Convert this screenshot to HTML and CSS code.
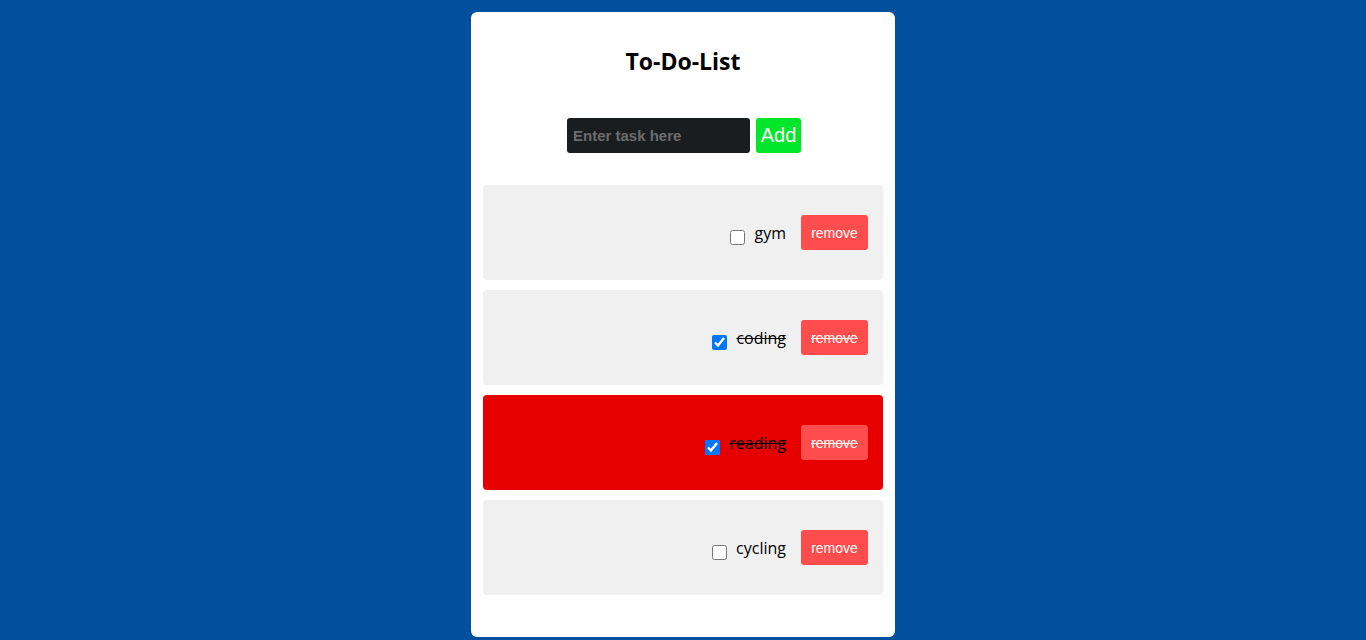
FILE: index.html
```html
<!DOCTYPE html>
<html>
<head>
<meta charset="utf-8">
<link rel="stylesheet" href="styles.css">
</head>
<body>
<div class="card">
  <h1 class="title">To-Do-List</h1>
  <div class="add-row">
    <input class="task-input" type="text" placeholder="Enter task here">
    <button class="add-btn">Add</button>
  </div>
  <ul class="list">
    <li class="item">
      <input type="checkbox" class="check">
      <span class="label">gym</span>
      <button class="remove">remove</button>
    </li>
    <li class="item done">
      <input type="checkbox" class="check" checked>
      <span class="label">coding</span>
      <button class="remove">remove</button>
    </li>
    <li class="item done urgent">
      <input type="checkbox" class="check" checked>
      <span class="label">reading</span>
      <button class="remove">remove</button>
    </li>
    <li class="item">
      <input type="checkbox" class="check">
      <span class="label">cycling</span>
      <button class="remove">remove</button>
    </li>
  </ul>
</div>
</body>
</html>
```

FILE: styles.css
```css
html, body {
  margin: 0;
  padding: 0;
}
body {
  background: #00509d;
  height: 640px;
  overflow: hidden;
  display: flex;
  justify-content: center;
  align-items: flex-start;
  font-family: "Open Sans", "Noto Sans", sans-serif;
}
.card {
  margin-top: 12px;
  width: 400px;
  background: #fff;
  border-radius: 6px;
  padding: 34px 12px 42px;
}
.title {
  margin: 0;
  text-align: center;
  font-size: 23px;
  line-height: 30px;
  font-weight: 700;
  color: #000;
}
.add-row {
  margin-top: 42px;
  padding-left: 2px;
  display: flex;
  justify-content: center;
  gap: 6px;
}
.task-input {
  width: 183px;
  height: 35px;
  box-sizing: border-box;
  background: #1a1d20;
  border: none;
  border-radius: 3px;
  padding: 0 6px;
  color: #fff;
  font-family: "Liberation Sans", Arial, sans-serif;
  font-weight: 700;
  font-size: 15px;
  outline: none;
}
.task-input::placeholder {
  color: #6c6c6c;
}
.add-btn {
  width: 45px;
  height: 35px;
  border: none;
  border-radius: 3px;
  background: #00e62a;
  color: #fff;
  font-family: "Liberation Sans", Arial, sans-serif;
  font-size: 20px;
  padding: 0;
}
.list {
  list-style: none;
  margin: 32px 0 0;
  padding: 0;
  display: flex;
  flex-direction: column;
  gap: 10px;
}
.item {
  height: 95px;
  background: #f0f0f0;
  border-radius: 4px;
  display: flex;
  justify-content: flex-end;
  align-items: center;
  padding: 0 15px;
}
.item.urgent {
  background: #e60000;
}
.check {
  width: 15px;
  height: 15px;
  margin: 9px 9px 0 0;
}
.label {
  font-size: 16px;
  color: #000;
  margin-right: 15px;
}
.remove {
  width: 67px;
  height: 35px;
  border: none;
  border-radius: 3px;
  background: #ff4d4d;
  color: #fff;
  font-family: "Liberation Sans", Arial, sans-serif;
  font-size: 14px;
  padding: 0;
}
.done .label,
.done .remove {
  text-decoration: line-through;
}
```
